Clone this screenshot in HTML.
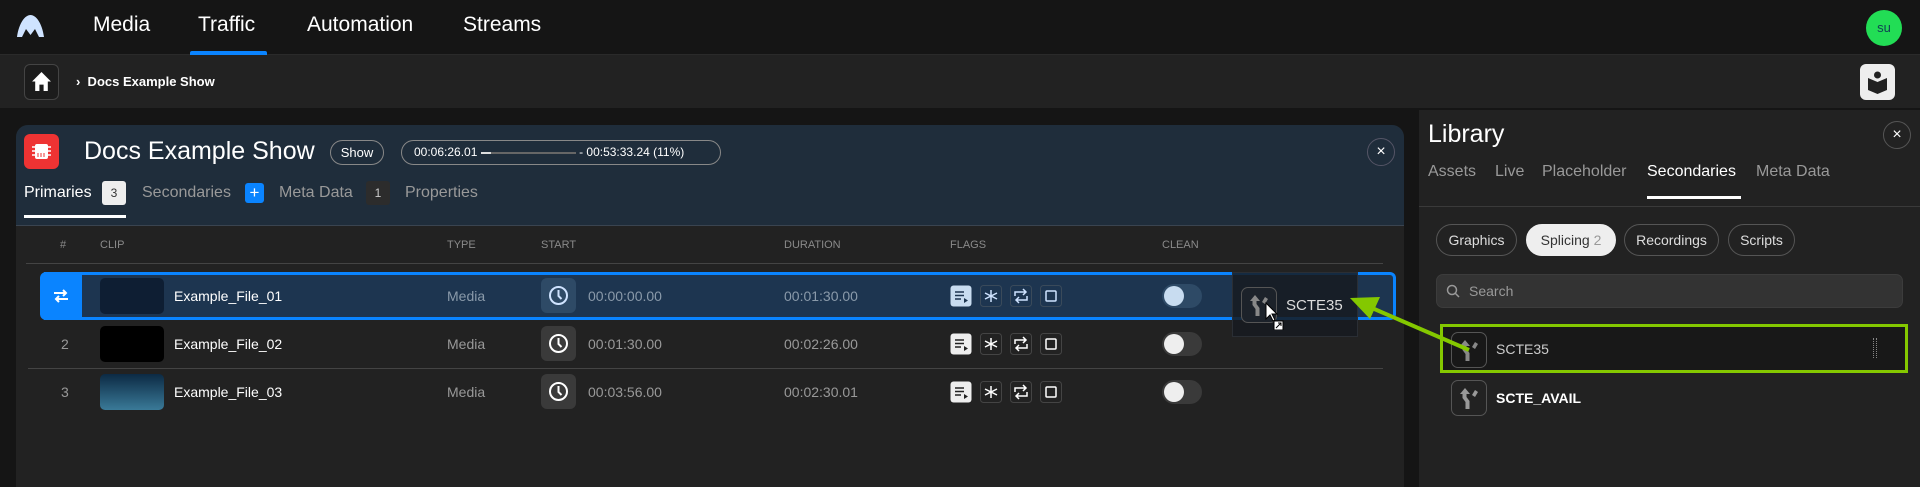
<!DOCTYPE html>
<html><head><meta charset="utf-8"><style>
*{box-sizing:border-box;margin:0;padding:0}
body{width:1920px;height:487px;overflow:hidden;background:#151515;font-family:"Liberation Sans",sans-serif;color:#fff;position:relative}
.a{position:absolute}
.nav{left:0;top:0;width:1920px;height:55px;background:#151515;border-bottom:1px solid #2a2a2a}
.navi{top:13px;font-size:21px;color:#fff}
.bc{left:0;top:55px;width:1920px;height:53px;background:#222}
.hdr{font-size:11px;color:#8a8a8a;top:239px}
.cell{font-size:14px}
.tog{width:40px;height:24px;border-radius:12px;background:#3a3a3a}
.tog i{position:absolute;left:2px;top:2px;width:20px;height:20px;border-radius:10px;background:#eee}
.clk{width:35px;height:35px;border-radius:6px;background:#3a3a3a}
.chip{top:224px;height:32px;border:1px solid #555;border-radius:16px;font-size:14px;line-height:30px;text-align:center;color:#ddd}
.ltab{top:163px;font-size:16px;color:#999}
.ib{width:36px;height:36px;border:1px solid #555;border-radius:7px}
</style></head><body>
<div class="a nav"></div>
<svg class="a" style="left:17px;top:15px" width="27" height="22" viewBox="0 0 27 22"><path d="M0 22 C2 8 8 0 13.5 0 C19 0 25 8 27 22 L22 22 L18 14 L13.5 20 L9 14 L5 22Z" fill="#cfe3ff"/></svg>
<div class="a navi" style="left:93px">Media</div>
<div class="a navi" style="left:198px">Traffic</div>
<div class="a navi" style="left:307px">Automation</div>
<div class="a navi" style="left:463px">Streams</div>
<div class="a" style="left:190px;top:51px;width:77px;height:4px;background:#0a84ff;border-radius:2px 2px 0 0"></div>
<div class="a" style="left:1866px;top:10px;width:36px;height:36px;border-radius:18px;background:#22dd55;color:#145;font-size:13px;text-align:center;line-height:36px">su</div>
<div class="a bc"></div>
<div class="a" style="left:24px;top:64px;width:35px;height:36px;border:1px solid #444;border-radius:6px;background:#1c1c1c"></div>
<svg class="a" style="left:31px;top:71px" width="21" height="21" viewBox="0 0 20 20"><path d="M10 1 L19 10 L16 10 L16 19 L12 19 L12 13 L8 13 L8 19 L4 19 L4 10 L1 10Z" fill="#fff"/></svg>
<div class="a" style="left:76px;top:74px;font-size:13px;font-weight:bold">›&nbsp; Docs Example Show</div>
<div class="a" style="left:1860px;top:64px;width:35px;height:36px;border-radius:6px;background:#eee"></div>
<svg class="a" style="left:1867px;top:70px" width="21" height="24" viewBox="0 0 21 24"><circle cx="10.5" cy="5" r="3.5" fill="#222"/><path d="M1 8 L10.5 12 L20 8 L20 20 L10.5 24 L1 20Z" fill="#222"/></svg>
<!-- main card -->
<div class="a" style="left:16px;top:125px;width:1388px;height:362px;background:#222;border-radius:12px 12px 0 0;overflow:hidden">
<div style="height:101px;background:#1f2d3b;border-bottom:1px solid #3a4450"></div>
</div>
<div class="a" style="left:24px;top:134px;width:35px;height:35px;border-radius:6px;background:#ee3333"></div>
<svg class="a" style="left:31px;top:141px" width="21" height="21" viewBox="0 0 21 21"><rect x="4" y="3" width="13" height="15" rx="2" fill="#fff"/><path d="M1 6h3M1 10h3M1 14h3M17 6h3M17 10h3M17 14h3" stroke="#fff" stroke-width="1.5"/><path d="M7 12v4M10 12v4M13 12v4" stroke="#e33" stroke-width="1"/></svg>
<div class="a" style="left:84px;top:137px;font-size:25px">Docs Example Show</div>
<div class="a" style="left:330px;top:140px;width:54px;height:25px;border:1px solid #888;border-radius:13px;font-size:13px;text-align:center;line-height:23px">Show</div>
<div class="a" style="left:401px;top:140px;width:320px;height:25px;border:1px solid #888;border-radius:13px;font-size:12px;line-height:23px;padding-left:12px;white-space:nowrap">00:06:26.01 <span style="display:inline-block;width:95px;height:2px;background:#666;vertical-align:middle;position:relative"><span style="position:absolute;left:0;top:0;width:10px;height:2px;background:#ddd"></span></span> - 00:53:33.24 (11%)</div>
<div class="a" style="left:1367px;top:138px;width:28px;height:28px;border:1px solid #556;border-radius:14px;text-align:center;line-height:26px;font-size:16px">×</div>
<div class="a" style="left:24px;top:184px;font-size:16px">Primaries</div>
<div class="a" style="left:102px;top:181px;width:24px;height:24px;background:#eee;color:#333;border-radius:3px;font-size:12px;text-align:center;line-height:24px">3</div>
<div class="a" style="left:142px;top:184px;font-size:16px;color:#999">Secondaries</div>
<div class="a" style="left:245px;top:183px;width:19px;height:20px;background:#0a84ff;border-radius:3px;font-size:17px;text-align:center;line-height:19px">+</div>
<div class="a" style="left:279px;top:184px;font-size:16px;color:#999">Meta Data</div>
<div class="a" style="left:366px;top:181px;width:24px;height:24px;background:#2c2c2c;color:#ccc;border-radius:3px;font-size:12px;text-align:center;line-height:24px">1</div>
<div class="a" style="left:405px;top:184px;font-size:16px;color:#999">Properties</div>
<div class="a" style="left:24px;top:215px;width:102px;height:3px;background:#fff"></div>
<!-- table header -->
<div class="a hdr" style="left:60px">#</div>
<div class="a hdr" style="left:100px">CLIP</div>
<div class="a hdr" style="left:447px">TYPE</div>
<div class="a hdr" style="left:541px">START</div>
<div class="a hdr" style="left:784px">DURATION</div>
<div class="a hdr" style="left:950px">FLAGS</div>
<div class="a hdr" style="left:1162px">CLEAN</div>
<div class="a" style="left:26px;top:263px;width:1357px;height:1px;background:#444"></div>
<!-- row1 -->
<div class="a" style="left:44px;top:272px;width:1352px;height:48px;border:3px solid #0a84ff;border-left:none;border-radius:0 6px 6px 0;background:#1d3550"></div>
<div class="a" style="left:40px;top:272px;width:42px;height:48px;background:#0a84ff;border-radius:6px 0 0 6px"></div>
<svg class="a" style="left:52px;top:287px" width="18" height="18" viewBox="0 0 18 18"><path d="M2 6h12M11 3l3 3-3 3M16 12H4M7 9l-3 3 3 3" stroke="#fff" stroke-width="2" fill="none"/></svg>
<div class="a" style="left:100px;top:278px;width:64px;height:36px;border-radius:5px;background:#0e1e33"></div>
<div class="a cell" style="left:174px;top:288px">Example_File_01</div>
<div class="a cell" style="left:447px;top:288px;color:#8a9aaa">Media</div>
<div class="a clk" style="left:541px;top:278px;background:#2e4a66"></div>
<div class="a cell" style="left:588px;top:288px;color:#8a9aaa">00:00:00.00</div>
<div class="a cell" style="left:784px;top:288px;color:#8a9aaa">00:01:30.00</div>
<!-- row2/3 -->
<div class="a" style="left:100px;top:326px;width:64px;height:36px;border-radius:5px;background:#000"></div>
<div class="a cell" style="left:61px;top:336px;color:#999">2</div>
<div class="a cell" style="left:174px;top:336px">Example_File_02</div>
<div class="a cell" style="left:447px;top:336px;color:#999">Media</div>
<div class="a clk" style="left:541px;top:326px"></div>
<div class="a cell" style="left:588px;top:336px;color:#999">00:01:30.00</div>
<div class="a cell" style="left:784px;top:336px;color:#999">00:02:26.00</div>
<div class="a" style="left:28px;top:368px;width:1355px;height:1px;background:#444"></div>
<div class="a" style="left:100px;top:374px;width:64px;height:36px;border-radius:5px;background:linear-gradient(#0c2a44,#3a7a98)"></div>
<div class="a cell" style="left:61px;top:384px;color:#999">3</div>
<div class="a cell" style="left:174px;top:384px">Example_File_03</div>
<div class="a cell" style="left:447px;top:384px;color:#999">Media</div>
<div class="a clk" style="left:541px;top:374px"></div>
<div class="a cell" style="left:588px;top:384px;color:#999">00:03:56.00</div>
<div class="a cell" style="left:784px;top:384px;color:#999">00:02:30.01</div>
<!-- clocks -->
<svg class="a" style="left:548px;top:285px" width="21" height="21" viewBox="0 0 21 21"><circle cx="10.5" cy="10.5" r="8.5" stroke="#cfe3ff" stroke-width="2" fill="none"/><path d="M10.5 5v6l3 3" stroke="#cfe3ff" stroke-width="2" fill="none"/></svg>
<svg class="a" style="left:548px;top:333px" width="21" height="21" viewBox="0 0 21 21"><circle cx="10.5" cy="10.5" r="8.5" stroke="#fff" stroke-width="2" fill="none"/><path d="M10.5 5v6l3 3" stroke="#fff" stroke-width="2" fill="none"/></svg>
<svg class="a" style="left:548px;top:381px" width="21" height="21" viewBox="0 0 21 21"><circle cx="10.5" cy="10.5" r="8.5" stroke="#fff" stroke-width="2" fill="none"/><path d="M10.5 5v6l3 3" stroke="#fff" stroke-width="2" fill="none"/></svg>
<!-- flags -->
<svg class="a" style="left:950px;top:285px" width="120" height="24" viewBox="0 0 120 24">
<rect x="0.5" y="0.5" width="21" height="21" rx="3" fill="#c8dcf0"/><path d="M5 7h9M5 10.5h9M5 14h6" stroke="#1d3550" stroke-width="1.6"/><path d="M14 13l4 2.5-4 2.5z" fill="#1d3550"/>
<rect x="30.5" y="0.5" width="21" height="21" rx="3" fill="none" stroke="#3a4a5a"/><path d="M41 5v12M35 8l12 6M35 14l12-6" stroke="#cfe3ff" stroke-width="1.5"/>
<rect x="60.5" y="0.5" width="21" height="21" rx="3" fill="none" stroke="#3a4a5a"/><path d="M65 11V7h11M73 4l3 3-3 3M77 11v4H66M69 12l-3 3 3 3" stroke="#cfe3ff" stroke-width="1.5" fill="none"/>
<rect x="90.5" y="0.5" width="21" height="21" rx="3" fill="none" stroke="#3a4a5a"/><rect x="96" y="6" width="10" height="10" rx="1" fill="none" stroke="#cfe3ff" stroke-width="1.5"/>
</svg>
<svg class="a" style="left:950px;top:333px" width="120" height="24" viewBox="0 0 120 24"><rect x="0.5" y="0.5" width="21" height="21" rx="3" fill="#eee"/><path d="M5 7h9M5 10.5h9M5 14h6" stroke="#222" stroke-width="1.6"/><path d="M14 13l4 2.5-4 2.5z" fill="#222"/><rect x="30.5" y="0.5" width="21" height="21" rx="3" fill="none" stroke="#444"/><path d="M41 5v12M35 8l12 6M35 14l12-6" stroke="#fff" stroke-width="1.5"/><rect x="60.5" y="0.5" width="21" height="21" rx="3" fill="none" stroke="#444"/><path d="M65 11V7h11M73 4l3 3-3 3M77 11v4H66M69 12l-3 3 3 3" stroke="#fff" stroke-width="1.5" fill="none"/><rect x="90.5" y="0.5" width="21" height="21" rx="3" fill="none" stroke="#444"/><rect x="96" y="6" width="10" height="10" rx="1" fill="none" stroke="#fff" stroke-width="1.5"/></svg>
<svg class="a" style="left:950px;top:381px" width="120" height="24" viewBox="0 0 120 24"><rect x="0.5" y="0.5" width="21" height="21" rx="3" fill="#eee"/><path d="M5 7h9M5 10.5h9M5 14h6" stroke="#222" stroke-width="1.6"/><path d="M14 13l4 2.5-4 2.5z" fill="#222"/><rect x="30.5" y="0.5" width="21" height="21" rx="3" fill="none" stroke="#444"/><path d="M41 5v12M35 8l12 6M35 14l12-6" stroke="#fff" stroke-width="1.5"/><rect x="60.5" y="0.5" width="21" height="21" rx="3" fill="none" stroke="#444"/><path d="M65 11V7h11M73 4l3 3-3 3M77 11v4H66M69 12l-3 3 3 3" stroke="#fff" stroke-width="1.5" fill="none"/><rect x="90.5" y="0.5" width="21" height="21" rx="3" fill="none" stroke="#444"/><rect x="96" y="6" width="10" height="10" rx="1" fill="none" stroke="#fff" stroke-width="1.5"/></svg>
<div class="a tog" style="left:1162px;top:284px;background:#2e4a66"><i style="background:#c8dcf0"></i></div>
<div class="a tog" style="left:1162px;top:332px"><i></i></div>
<div class="a tog" style="left:1162px;top:380px"><i></i></div>
<!-- drag ghost -->
<div class="a" style="left:1232px;top:272px;width:126px;height:65px;background:rgba(22,26,32,0.85);border:1px solid #2a2e34"></div>
<div class="a ib" style="left:1241px;top:287px;border-color:#555;background:#1c222a"></div>
<svg class="a" style="left:1247px;top:293px" width="24" height="24" viewBox="0 0 24 24"><path d="M3 8l5-6 5 6h-3.5v3l3 4v8h-4v-7l-3-4V8z" fill="#888"/><path d="M15 9l3-5 3 2-3 5z" fill="#888"/></svg>
<div class="a" style="left:1286px;top:297px;font-size:15px;color:#ddd">SCTE35</div>
<svg class="a" style="left:1265px;top:302px" width="20" height="28" viewBox="0 0 20 28"><path d="M1 1v16l4-4 3 6 2-1-3-6h5z" fill="#fff" stroke="#000"/><rect x="9" y="19" width="9" height="9" fill="#fff" stroke="#000"/><path d="M11 26l5-5M13 21h3v3" stroke="#000" fill="none"/></svg>
<!-- library panel -->
<div class="a" style="left:1419px;top:110px;width:501px;height:377px;background:#222"></div>
<div class="a" style="left:1428px;top:120px;font-size:25px">Library</div>
<div class="a" style="left:1883px;top:121px;width:28px;height:28px;border:1px solid #555;border-radius:14px;text-align:center;line-height:26px;font-size:16px">×</div>
<div class="a ltab" style="left:1428px">Assets</div>
<div class="a ltab" style="left:1495px">Live</div>
<div class="a ltab" style="left:1542px">Placeholder</div>
<div class="a ltab" style="left:1647px;color:#fff">Secondaries</div>
<div class="a ltab" style="left:1756px">Meta Data</div>
<div class="a" style="left:1647px;top:196px;width:94px;height:3px;background:#fff"></div>
<div class="a" style="left:1419px;top:206px;width:501px;height:1px;background:#3a3a3a"></div>
<div class="a chip" style="left:1436px;width:81px">Graphics</div>
<div class="a chip" style="left:1526px;width:90px;background:#eee;border-color:#eee;color:#333">Splicing <span style="color:#999">2</span></div>
<div class="a chip" style="left:1624px;width:95px">Recordings</div>
<div class="a chip" style="left:1728px;width:67px">Scripts</div>
<div class="a" style="left:1436px;top:274px;width:467px;height:34px;background:#333;border:1px solid #3c3c3c;border-radius:7px"></div>
<svg class="a" style="left:1446px;top:284px" width="14" height="14" viewBox="0 0 14 14"><circle cx="6" cy="6" r="4.5" stroke="#999" stroke-width="1.5" fill="none"/><path d="M9.5 9.5L13 13" stroke="#999" stroke-width="1.5"/></svg>
<div class="a" style="left:1469px;top:283px;font-size:14px;color:#999">Search</div>
<div class="a" style="left:1440px;top:324px;width:468px;height:49px;border:3px solid #84c800;background:#181818"></div>
<div class="a ib" style="left:1451px;top:332px"></div>
<svg class="a" style="left:1457px;top:338px" width="24" height="24" viewBox="0 0 24 24"><path d="M3 8l5-6 5 6h-3.5v3l3 4v8h-4v-7l-3-4V8z" fill="#888"/><path d="M15 9l3-5 3 2-3 5z" fill="#888"/></svg>
<div class="a" style="left:1496px;top:341px;font-size:14px;color:#ccc">SCTE35</div>
<div class="a" style="left:1873px;top:338px;width:4px;height:20px;border-left:1px dotted #888;border-right:1px dotted #888"></div>
<div class="a ib" style="left:1451px;top:380px"></div>
<svg class="a" style="left:1457px;top:386px" width="24" height="24" viewBox="0 0 24 24"><path d="M3 8l5-6 5 6h-3.5v3l3 4v8h-4v-7l-3-4V8z" fill="#999"/><path d="M15 9l3-5 3 2-3 5z" fill="#999"/></svg>
<div class="a" style="left:1496px;top:390px;font-size:14px;color:#fff;font-weight:bold">SCTE_AVAIL</div>
<!-- green arrow -->
<svg class="a" style="left:0;top:0" width="1920" height="487"><path d="M1469 350 L1372 308" stroke="#84c800" stroke-width="4"/><path d="M1350 298 L1380 297 L1370 319Z" fill="#84c800"/></svg>
</body></html>
